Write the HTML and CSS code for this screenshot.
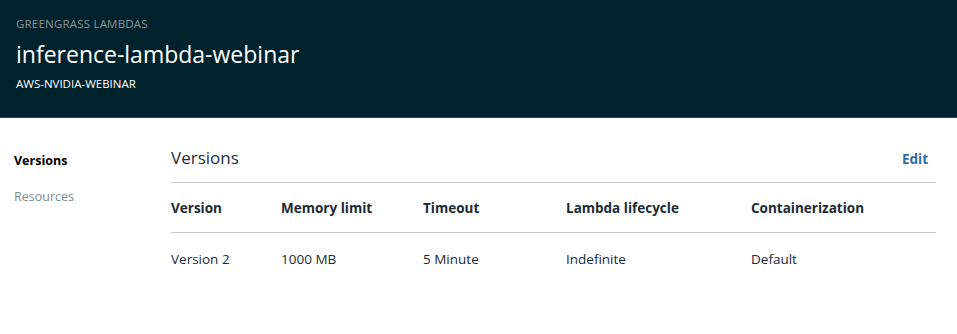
FILE: index.html
```html
<!doctype html>
<html lang="en">
<head>
	<meta charset="utf-8">
	<meta name="viewport" content="width=device-width, initial-scale=1">
	<title>inference-lambda-webinar | Greengrass Lambdas</title>
	<link rel="stylesheet" href="styles.css">
</head>
<body>

	<header class="page-head">
		<div class="page-head-label">GREENGRASS LAMBDAS</div>
		<h1 class="page-head-title">inference-lambda-webinar</h1>
		<div class="page-head-sub">AWS-NVIDIA-WEBINAR</div>
	</header>

	<div class="layout">
		<nav class="side-nav">
			<a class="side-nav-item is-active" href="#versions">Versions</a>
			<a class="side-nav-item" href="#resources">Resources</a>
		</nav>

		<main class="content">
			<div class="section-head">
				<h2 class="section-title">Versions</h2>
				<a class="section-link" href="#edit">Edit</a>
			</div>

			<div class="table">
				<div class="table-row table-row-head">
					<div class="table-cell">Version</div>
					<div class="table-cell">Memory limit</div>
					<div class="table-cell">Timeout</div>
					<div class="table-cell">Lambda lifecycle</div>
					<div class="table-cell">Containerization</div>
				</div>
				<div class="table-row">
					<div class="table-cell">Version 2</div>
					<div class="table-cell">1000 MB</div>
					<div class="table-cell">5 Minute</div>
					<div class="table-cell">Indefinite</div>
					<div class="table-cell">Default</div>
				</div>
			</div>
		</main>
	</div>

</body>
</html>
```

FILE: styles.css
```css
:root {
	--font-family: 'Open Sans', 'Noto Sans', 'Liberation Sans', sans-serif;
	--color: #1b2a32;
	--color-grey: #7d8a8e;
	--color-line: #c6c6c6;
	--color-link: #2b6daa;
	--head-bg: #00222c;
}

*,
::after,
::before {
	box-sizing: border-box;
	margin: 0;
	padding: 0;
}

body {
	min-height: 100vh;
	color: var(--color);
	font: 400 14px/20px var(--font-family);
	background: #fff;
}

a {
	text-decoration: none;
}

/* Шапка */

.page-head {
	height: 118px;
	padding: 16px 16px 0;
	background: var(--head-bg);
	border-bottom: 1px solid #2a4650;
}

.page-head-label {
	color: #8a9597;
	font-size: 11.5px;
	line-height: 16px;
	letter-spacing: .2px;
}

.page-head-title {
	margin-top: 7px;
	color: #fff;
	font-size: 23px;
	font-weight: 400;
	line-height: 30px;
}

.page-head-sub {
	margin-top: 7px;
	color: #fff;
	font-size: 11.5px;
	line-height: 16px;
}

/* Основная часть */

.layout {
	display: flex;
}

.side-nav {
	display: flex;
	flex-direction: column;
	gap: 16px;
	width: 171px;
	padding: 33px 0 0 14px;
}

.side-nav-item {
	color: var(--color-grey);
	font-size: 12.5px;
	line-height: 20px;
}

.side-nav-item.is-active {
	color: #000;
	font-weight: 700;
}

.content {
	flex: 1;
	padding: 28px 21px 0 0;
}

.section-head {
	display: flex;
	align-items: center;
	justify-content: space-between;
	padding: 0 8px 12px 0;
	border-bottom: 1px solid var(--color-line);
}

.section-title {
	color: #1d2e38;
	font-size: 17px;
	font-weight: 400;
	line-height: 24px;
}

.section-link {
	margin-top: 2px;
	color: var(--color-link);
	font-size: 13.5px;
	font-weight: 700;
}

.table-row {
	display: grid;
	grid-template-columns: 110px 142px 143px 185px 1fr;
	align-items: center;
	height: 50px;
}

.table-row-head {
	font-weight: 700;
	border-bottom: 1px solid var(--color-line);
}

.table-cell {
	padding-top: 1px;
	font-size: 13.5px;
	white-space: nowrap;
}
```
